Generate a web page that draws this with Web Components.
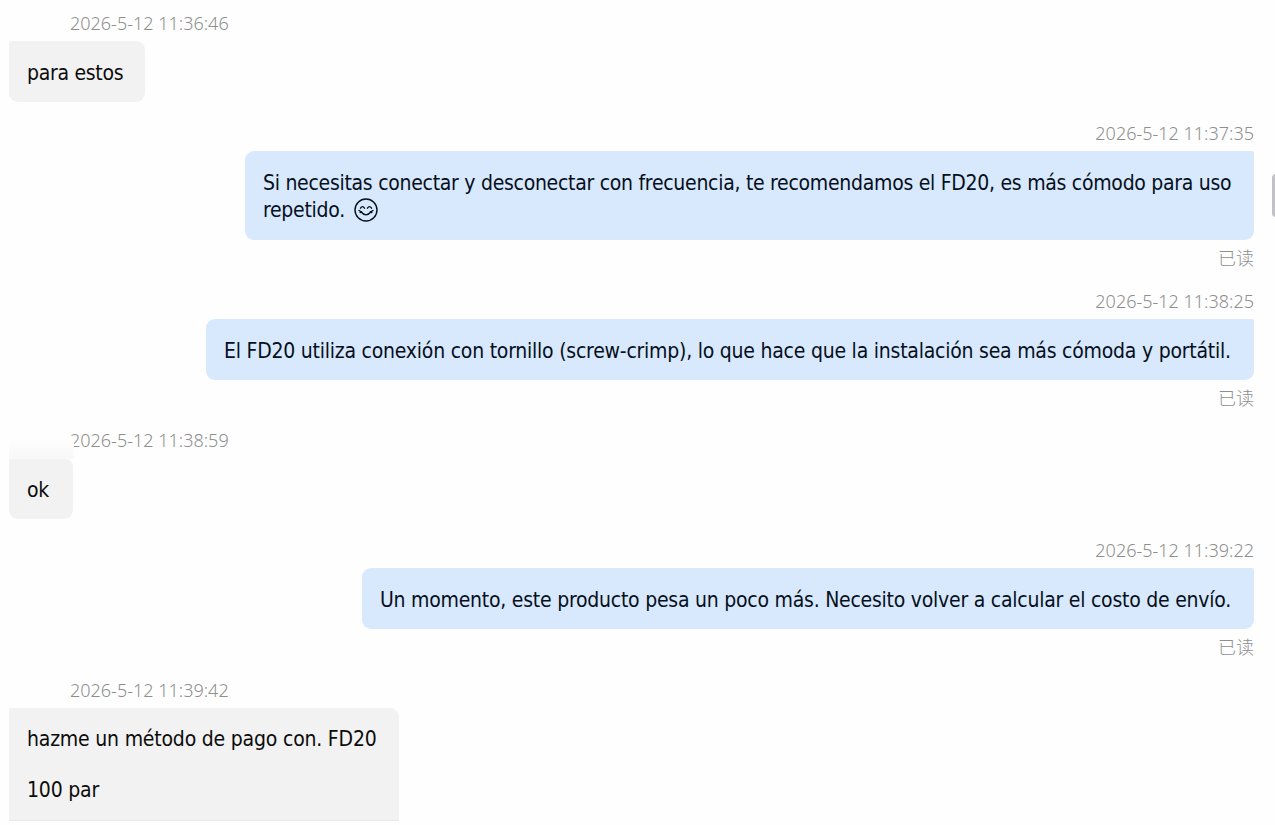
<!DOCTYPE html>
<html lang="es">
<head>
<meta charset="utf-8">
<title>Chat</title>
<style>
    body {
        margin: 0;
        background: #fefefe;
        overflow: hidden;
    }
</style>
</head>
<body>
<chat-log>
    <chat-message time="2026-5-12 11:36:46" style="--bubble-width: 136px; --tracking: -0.3px"><p>para estos</p></chat-message>
    <chat-message sent time="2026-5-12 11:37:35" status="已读" style="--bubble-width: 1009px; --bubble-height: 89px; --tracking: -0.28px"><p>Si necesitas conectar y desconectar con frecuencia, te recomendamos el FD20, es más cómodo para uso<br>repetido. <smile-icon></smile-icon></p></chat-message>
    <chat-message sent time="2026-5-12 11:38:25" status="已读" style="--bubble-width: 1048px; --tracking: -0.23px; margin-bottom: -1px"><p>El FD20 utiliza conexión con tornillo (screw-crimp), lo que hace que la instalación sea más cómoda y portátil.</p></chat-message>
    <chat-message masked time="2026-5-12 11:38:59" style="--bubble-width: 64px"><p>ok</p></chat-message>
    <chat-message sent time="2026-5-12 11:39:22" status="已读" style="--bubble-width: 892px; --tracking: -0.24px"><p>Un momento, este producto pesa un poco más. Necesito volver a calcular el costo de envío.</p></chat-message>
    <chat-message open time="2026-5-12 11:39:42"><p>hazme un método de pago con. FD20</p><p>100 par</p></chat-message>
</chat-log>

<script>
class ChatLog extends HTMLElement {
    constructor() {
        super();
        this.attachShadow({ mode: 'open' });
        this.shadowRoot.innerHTML = `
            <style>
                :host {
                    display: flex;
                    flex-direction: column;
                    gap: 15px;
                    position: relative;
                    box-sizing: border-box;
                    height: 825px;
                    padding: 7px 21px 0 9px;
                    overflow: hidden;
                    font-family: Tahoma, "DejaVu Sans Condensed", "Noto Sans CJK SC", sans-serif;
                }
                .thumb {
                    position: absolute;
                    top: 174px;
                    right: -5px;
                    width: 8px;
                    height: 43px;
                    border-radius: 4px;
                    background: #c1c1c6;
                }
            </style>
            <slot></slot>
            <div class="thumb"></div>
        `;
    }
}

class ChatMessage extends HTMLElement {
    constructor() {
        super();
        this.attachShadow({ mode: 'open' });
    }

    connectedCallback() {
        this.render();
    }

    render() {
        const status = this.getAttribute('status');
        this.shadowRoot.innerHTML = `
            <style>
                :host {
                    display: flex;
                    flex-direction: column;
                    align-items: flex-start;
                    flex-shrink: 0;
                    position: relative;
                }
                :host([sent]) {
                    align-items: flex-end;
                }
                .time {
                    height: 34px;
                    line-height: 33px;
                    padding-left: 61px;
                    font-family: "Noto Sans", sans-serif;
                    font-size: 18px;
                    font-weight: 300;
                    color: #8e8e8e;
                    white-space: nowrap;
                }
                .bubble {
                    box-sizing: border-box;
                    width: var(--bubble-width, auto);
                    height: var(--bubble-height, 61px);
                    padding: 19px 22px 15px 18px;
                    border-radius: 2px 9px 9px 9px;
                    background: #f2f2f2;
                    color: #0c0c0c;
                    font-size: 21px;
                    letter-spacing: var(--tracking, -0.2px);
                    line-height: 27px;
                    white-space: nowrap;
                }
                :host([sent]) .bubble {
                    border-radius: 9px 2px 9px 9px;
                    background: #d8e9fd;
                    color: #060f1c;
                }
                :host([open]) .bubble {
                    height: 113px;
                    padding-top: 18px;
                    border-radius: 2px 9px 0 0;
                    border-bottom: 1px solid #e9e9e9;
                }
                .status {
                    height: 30px;
                    line-height: 35px;
                    font-family: "Noto Sans CJK SC", sans-serif;
                    font-size: 18px;
                    font-weight: 300;
                    color: #8e8e8e;
                }
                /* soft cover over the sender's name */
                .mask {
                    display: none;
                    position: absolute;
                    left: 0;
                    top: 15px;
                    width: 65px;
                    height: 20px;
                    background: linear-gradient(#fefefe, #f8f8f8);
                }
                :host([masked]) .mask {
                    display: block;
                }
                ::slotted(p) {
                    margin: 0 0 24px;
                }
                ::slotted(p:last-child) {
                    margin: 0;
                }
            </style>
            <div class="time">${this.getAttribute('time')}</div>
            <div class="bubble"><slot></slot></div>
            ${status ? `<div class="status">${status}</div>` : ''}
            <div class="mask"></div>
        `;
    }
}

class SmileIcon extends HTMLElement {
    constructor() {
        super();
        this.attachShadow({ mode: 'open' });
        this.shadowRoot.innerHTML = `
            <style>
                :host {
                    display: inline-block;
                    width: 24px;
                    height: 24px;
                    margin-left: 3px;
                    vertical-align: -5px;
                }
                svg {
                    display: block;
                }
            </style>
            <svg width="24" height="24" viewBox="0 0 24 24" fill="none" stroke="currentColor" stroke-width="1.4" stroke-linecap="round">
                <circle cx="12" cy="12" r="11"/>
                <path d="M6.500 10.200q2-3.200 4 0M13.500 10.200q2-3.200 4 0"/>
                <path d="M7 13.800q5 6.200 10 0"/>
                <path d="M5 12.500l2.200 1.300l-1 .8M19 12.500l-2.200 1.300l1 .8"/>
            </svg>
        `;
    }
}

customElements.define('chat-log', ChatLog);
customElements.define('chat-message', ChatMessage);
customElements.define('smile-icon', SmileIcon);
</script>
</body>
</html>
